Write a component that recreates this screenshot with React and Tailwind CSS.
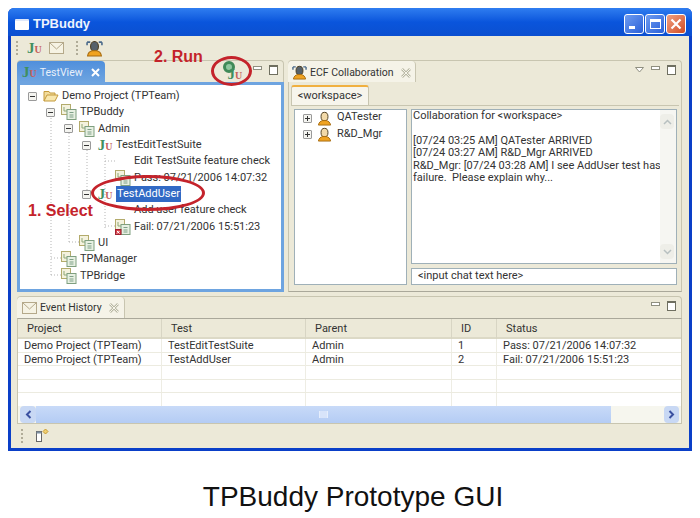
const font = "font-['Roboto',sans-serif]";

function JU({ className = "" }) {
  return (
    <span className={`inline-flex items-baseline font-['Liberation_Serif',serif] font-bold leading-none ${className}`}>
      <span className="text-[15px] text-[#3f8f5f]">J</span>
      <span className="text-[10px] text-[#c4605a]">U</span>
    </span>
  );
}

function PackageIcon({ fail }) {
  return (
    <svg width="16" height="16" viewBox="0 0 16 16" className="shrink-0">
      <rect x="0.5" y="0.5" width="9" height="10" fill="#f4f2de" stroke="#b3ab6c" />
      <path d="M3 3v4h3" stroke="#8fa878" fill="none" />
      <rect x="6" y="5.5" width="9" height="10" fill="#e7f0e2" stroke="#7f9f80" />
      <path d="M8.5 8.5h4M8.5 11h4M8.5 13h4" stroke="#7fa088" />
      {fail && <rect x="0.5" y="10.5" width="5.5" height="5" fill="#d8404a" stroke="#a02030" />}
      {fail && <path d="M2 12l2.5 2.5M4.5 12L2 14.5" stroke="#fff" />}
    </svg>
  );
}

function FolderIcon() {
  return (
    <svg width="16" height="14" viewBox="0 0 16 14" className="shrink-0">
      <path d="M1 12V2.5h5l1 1.5h5v2" fill="#f2dc9c" stroke="#c49a3c" />
      <path d="M1 12l3-6h11l-3 6z" fill="#f8e7ae" stroke="#c49a3c" />
    </svg>
  );
}

function MailIcon() {
  return (
    <svg width="15" height="12" viewBox="0 0 15 12" className="shrink-0">
      <rect x="0.5" y="0.5" width="14" height="11" fill="#f6f3e4" stroke="#b5a98a" />
      <path d="M1 1l6.5 6L14 1" fill="none" stroke="#b5a98a" />
    </svg>
  );
}

function PersonIcon({ size = 15, dark }) {
  return (
    <svg width={size} height={size} viewBox="0 0 16 16" className="shrink-0">
      {dark && <path d="M1 2h3M12 2h3M1 2v3M15 2v3" stroke="#4a6a8a" strokeWidth="1.5" fill="none" />}
      <ellipse cx="8" cy="6" rx="3.7" ry="4.6" fill={dark ? "#56616a" : "#f2d9a8"} stroke="#4a3a1c" />
      <path d="M1.5 15c.4-3 2.6-4.4 4.5-4.8h4c1.9.4 4.1 1.8 4.5 4.8z" fill="#f0a321" stroke="#a86c10" />
    </svg>
  );
}

function PaneButtons({ menu }) {
  return (
    <div className="flex items-center gap-[7px]">
      {menu && (
        <svg width="9" height="6" viewBox="0 0 9 6"><path d="M.5.5h8L4.5 5z" fill="#fff" stroke="#8f8f80" /></svg>
      )}
      <div className="w-[9px] h-[4px] bg-white border border-[#8f8f80] mb-[4px]" />
      <div className="w-[9px] h-[10px] bg-white border border-[#6f6f60] border-t-2" />
    </div>
  );
}

function ScrollArrow({ down }) {
  return (
    <div className="w-[14px] h-[15px] bg-[#eeeee8] rounded-sm flex items-center justify-center">
      <svg width="9" height="6" viewBox="0 0 9 6">
        <path d={down ? "M1 1l3.5 3.5L8 1" : "M1 5l3.5-3.5L8 5"} fill="none" stroke="#b8c0c0" strokeWidth="1.5" />
      </svg>
    </div>
  );
}

function CloseX() {
  return (
    <svg className="shrink-0" width="10" height="10" viewBox="0 0 10 10">
      <path d="M1 1l8 8M9 1L1 9" stroke="#b8b8a4" strokeWidth="2.5" />
      <path d="M1 1l8 8M9 1L1 9" stroke="#f6f4ea" strokeWidth="1" />
    </svg>
  );
}

const tree = [
  { pad: "pl-[8px]", exp: "-", icon: "folder", text: "Demo Project (TPTeam)" },
  { pad: "pl-[26px]", exp: "-", icon: "pkg", text: "TPBuddy" },
  { pad: "pl-[44px]", exp: "-", icon: "pkg", text: "Admin" },
  { pad: "pl-[62px]", exp: "-", icon: "ju", text: "TestEditTestSuite" },
  { pad: "pl-[80px]", text: "Edit TestSuite feature check" },
  { pad: "pl-[80px]", icon: "pkg", text: "Pass: 07/21/2006 14:07:32" },
  { pad: "pl-[62px]", exp: "-", icon: "ju", text: "TestAddUser", selected: true },
  { pad: "pl-[80px]", text: "Add user feature check" },
  { pad: "pl-[80px]", icon: "fail", text: "Fail: 07/21/2006 15:51:23" },
  { pad: "pl-[44px]", icon: "pkg", text: "UI" },
  { pad: "pl-[26px]", icon: "pkg", text: "TPManager" },
  { pad: "pl-[26px]", icon: "pkg", text: "TPBridge" },
];

function Expander({ plus }) {
  return (
    <div className="relative w-[9px] h-[9px] bg-[#f4f4f0] border border-[#9a9a9a] rounded-[1px] flex items-center justify-center shrink-0">
      <div className="w-[5px] h-px bg-[#333]" />
      {plus && <div className="absolute w-px h-[5px] bg-[#333]" />}
    </div>
  );
}

function TreeRow({ row }) {
  return (
    <div className={`flex items-center h-[16.33px] ${row.pad}`}>
      <div className="w-[15px] shrink-0">{row.exp && <Expander />}</div>
      <div className="w-[16px] h-[16px] flex items-center justify-center shrink-0">
        {row.icon === "folder" && <FolderIcon />}
        {row.icon === "pkg" && <PackageIcon />}
        {row.icon === "fail" && <PackageIcon fail />}
        {row.icon === "ju" && <JU />}
      </div>
      <span
        className={
          row.selected
            ? "ml-[3px] px-px h-[16px] leading-[16px] bg-[#316ac5] text-white"
            : "ml-[3px] text-[#333]"
        }
      >
        {row.text}
      </span>
    </div>
  );
}

const events = [
  ["Demo Project (TPTeam)", "TestEditTestSuite", "Admin", "1", "Pass: 07/21/2006 14:07:32"],
  ["Demo Project (TPTeam)", "TestAddUser", "Admin", "2", "Fail: 07/21/2006 15:51:23"],
  ["", "", "", "", ""],
  ["", "", "", "", ""],
  ["", "", "", "", ""],
];

const cols = "grid grid-cols-[144px_144px_146px_45px_1fr]";

export default function App() {
  return (
    <div className={`relative w-[700px] h-[518px] bg-white overflow-hidden ${font} text-[11px] text-[#333]`}>
      <div className="pt-[8px] pl-[8px]">
        {/* window */}
        <div className="w-[684px] h-[443px] flex flex-col rounded-t-[6px] bg-[#0a3fc8] px-[3px] pb-[3px]">
          <div className="h-[28px] shrink-0 flex items-center -mx-[3px] px-[6px] pt-[4px] rounded-t-[6px] bg-gradient-to-b from-[#2f7df0] via-[#0a55dc] to-[#0b4fd0]">
            <div className="w-[14px] h-[11px] ml-[1px] bg-white rounded-[1px] border-t-2 border-[#dfe8fa]" />
            <span className="ml-[4px] font-bold text-[13px] text-[#eef3fd] font-['Liberation_Sans',sans-serif]">TPBuddy</span>
            <div className="ml-auto flex gap-[1px]">
              <div className="w-[20px] h-[20px] rounded-[3px] border border-white bg-gradient-to-br from-[#6f9cf0] to-[#2a5fd8] flex items-end pl-[4px] pb-[4px]">
                <div className="w-[6px] h-[3px] bg-white" />
              </div>
              <div className="w-[20px] h-[20px] rounded-[3px] border border-white bg-gradient-to-br from-[#6f9cf0] to-[#2a5fd8] flex items-center justify-center">
                <div className="w-[11px] h-[10px] border border-white border-t-[3px]" />
              </div>
              <div className="w-[20px] h-[20px] rounded-[3px] border border-white bg-gradient-to-br from-[#f0a080] to-[#d04a20] flex items-center justify-center">
                <svg width="12" height="12" viewBox="0 0 12 12"><path d="M1.5 1.5l9 9M10.5 1.5l-9 9" stroke="#fff" strokeWidth="2.2" /></svg>
              </div>
            </div>
          </div>

          <div className="flex-1 min-h-0 flex flex-col bg-[#ece9d8]">
            {/* toolbar */}
            <div className="h-[24px] shrink-0 flex items-center pl-[5px]">
              <div className="w-[2px] h-[14px] border-l-2 border-dotted border-[#b0ac98]" />
              <JU className="ml-[9px]" />
              <div className="ml-[7px]"><MailIcon /></div>
              <div className="ml-[12px] w-[2px] h-[14px] border-l-2 border-dotted border-[#b0ac98]" />
              <div className="ml-[8px]"><PersonIcon size={17} dark /></div>
            </div>

            {/* top panes */}
            <div className="h-[232px] shrink-0 flex gap-[4px] pl-[6px]">
              {/* test view */}
              <div className="w-[267px] flex flex-col">
                <div className="h-[22px] shrink-0 flex items-stretch bg-[#ece9d8] border border-b-0 border-[#c8c5b0] rounded-t-[4px]">
                  <div className="w-[88px] -ml-px flex items-center pl-[5px] pt-[2px] rounded-t-[4px] bg-gradient-to-b from-[#4f8fdc] to-[#6ea4e0] whitespace-nowrap">
                    <JU />
                    <span className="ml-[3px] text-[10.500px] text-[#e8f0fa]">TestView</span>
                    <svg className="ml-[8px]" width="9" height="9" viewBox="0 0 9 9"><path d="M1 1l7 7M8 1L1 8" stroke="#fff" strokeWidth="2" /></svg>
                  </div>
                  <div className="ml-auto flex items-center pr-[5px] pb-[4px]"><PaneButtons /></div>
                </div>
                <div className="relative flex-1 min-h-0 border-[3px] border-[#6ea4e0] bg-white pt-[3px]">
                  <svg className="absolute left-0 top-0" width="261" height="207" viewBox="0 0 261 207" fill="none" stroke="#b5b5b5" strokeDasharray="1 2">
                    <path d="M13 14v2M31 24v166M31 173h12M31 190h12M49 48v109M49 157h12M67 62v50M85 70v73M85 76h12M85 141h12" />
                  </svg>
                  <div className="relative">
                    {tree.map((row, i) => (
                      <TreeRow key={i} row={row} />
                    ))}
                  </div>
                </div>
              </div>

              {/* collaboration */}
              <div className="w-[394px] flex flex-col">
                <div className="h-[22px] shrink-0 flex items-stretch border border-b-0 border-[#c8c5b0] rounded-t-[4px]">
                  <div className="w-[128px] -ml-px flex items-center pl-[4px] pt-[2px] bg-[#f5f3e8] border-r border-[#c8c5b0] rounded-t-[4px] whitespace-nowrap">
                    <PersonIcon size={15} dark />
                    <span className="ml-[3px] text-[10.500px]">ECF Collaboration</span>
                    <div className="ml-[7px]"><CloseX /></div>
                  </div>
                  <div className="ml-auto flex items-center pr-[5px] pb-[3px]"><PaneButtons menu /></div>
                </div>
                <div className="flex-1 min-h-0 flex flex-col border border-t-0 border-[#c8c5b0] border-b-[#aaa89a] px-[2px] pt-[3px] pb-[6px]">
                  <div className="w-[78px] h-[20px] shrink-0 flex items-center justify-center bg-[#f7f5ec] border-t-2 border-x border-[#f0b040] border-x-[#c8c5b0] rounded-t-[3px]">
                    &lt;workspace&gt;
                  </div>
                  <div className="flex-1 min-h-0 flex gap-[4px] pl-[3px] pr-[2px] pt-[3px] border-t border-[#c8c5b0]">
                    <div className="w-[113px] bg-white border border-[#9fb0b8]">
                      {["QATester", "R&D_Mgr"].map((name) => (
                        <div key={name} className="flex items-center h-[16.500px] pl-[8px]">
                          <Expander plus />
                          <div className="ml-[5px]"><PersonIcon size={15} /></div>
                          <span className="ml-[5px] -mt-[2px]">{name}</span>
                        </div>
                      ))}
                    </div>
                    <div className="flex-1 min-w-0 flex flex-col gap-[4px]">
                      <div className="flex-1 min-h-0 flex bg-white border border-[#9fb0b8]">
                        <div className="flex-1 min-w-0 pl-[1px] leading-[12.5px] whitespace-nowrap">
                          <p>Collaboration for &lt;workspace&gt;</p>
                          <p className="mt-[12px]">[07/24 03:25 AM] QATester ARRIVED</p>
                          <p>[07/24 03:27 AM] R&amp;D_Mgr ARRIVED</p>
                          <p className="whitespace-pre">{"R&D_Mgr: [07/24 03:28 AM] I see AddUser test has\nfailure.  Please explain why..."}</p>
                        </div>
                        <div className="w-[16px] shrink-0 flex flex-col justify-between bg-[#f6f6f2] py-[4px]">
                          <ScrollArrow />
                          <ScrollArrow down />
                        </div>
                      </div>
                      <div className="h-[17px] shrink-0 flex items-center pl-[6px] bg-white border border-[#9fb0b8]">
                        &lt;input chat text here&gt;
                      </div>
                    </div>
                  </div>
                </div>
              </div>
            </div>

            {/* event history */}
            <div className="mt-[4px] ml-[6px] w-[665px] h-[128px] shrink-0 flex flex-col">
              <div className="h-[22px] shrink-0 flex items-stretch border border-b-0 border-[#c8c5b0] rounded-t-[4px]">
                <div className="w-[108px] -ml-px flex items-center pl-[5px] pt-[1px] bg-[#f5f3e8] border-r border-[#c8c5b0] rounded-t-[4px] whitespace-nowrap">
                  <MailIcon />
                  <span className="ml-[3px] text-[10.500px]">Event History</span>
                  <div className="ml-[7px]"><CloseX /></div>
                </div>
                <div className="ml-auto flex items-center pr-[5px] pb-[3px]"><PaneButtons /></div>
              </div>
              <div className="flex-1 min-h-0 flex flex-col border border-[#c8c5b0] border-t-[#aaa89a]">
                <div className={`${cols} h-[20px] shrink-0 bg-[#ece9d8] border-b-2 border-[#dcd9c6]`}>
                  {["Project", "Test", "Parent", "ID", "Status"].map((h) => (
                    <div key={h} className="pl-[9px] leading-[20px] border-r border-[#d8d5c4] last:border-r-0">{h}</div>
                  ))}
                </div>
                <div className="flex-1 min-h-0 bg-white">
                  {events.map((row, i) => (
                    <div key={i} className={`${cols} h-[13.500px] border-b border-[#ecebe0]`}>
                      {row.map((cell, j) => (
                        <div key={j} className="pl-[6px] leading-[13px] border-r border-[#eeede4] last:border-r-0">{cell}</div>
                      ))}
                    </div>
                  ))}
                </div>
                <div className="h-[17px] shrink-0 flex items-stretch bg-[#f6f6ee]">
                  <div className="w-[16px] ml-[2px] flex items-center justify-center bg-[#c8d8f4] rounded-sm">
                    <svg width="7" height="9" viewBox="0 0 7 9"><path d="M5.5 1L2 4.5 5.5 8" fill="none" stroke="#3a50a0" strokeWidth="2" /></svg>
                  </div>
                  <div className="w-[575px] flex items-center justify-center bg-gradient-to-b from-[#c8daf8] to-[#b4ccf4]">
                    <div className="w-[9px] h-[7px] border-x border-[#e6eefc] bg-[#d8e4fa]" />
                  </div>
                  <div className="ml-auto mr-[2px] w-[15px] flex items-center justify-center bg-[#c8d8f4] rounded-sm">
                    <svg width="7" height="9" viewBox="0 0 7 9"><path d="M1.5 1L5 4.5 1.5 8" fill="none" stroke="#3a50a0" strokeWidth="2" /></svg>
                  </div>
                </div>
              </div>
            </div>

            {/* status bar */}
            <div className="flex-1 flex items-center pl-[10px]">
              <div className="w-[2px] h-[14px] border-l-2 border-dotted border-[#b0ac98]" />
              <svg className="ml-[13px]" width="13" height="14" viewBox="0 0 13 14">
                <rect x="0.5" y="2.5" width="5" height="10" fill="#fff" stroke="#666" />
                <rect x="0.5" y="2.5" width="5" height="2" fill="#7d8ea0" />
                <path d="M9.5 0l2.5 2.5-2.5 2.5L7 2.5z" fill="#f0d070" stroke="#c89a30" />
              </svg>
            </div>
          </div>
        </div>
      </div>

      <p className="mt-[31px] pl-[6px] text-center font-['Liberation_Sans',sans-serif] text-[28px] leading-[30px] text-[#111]">
        TPBuddy Prototype GUI
      </p>

      {/* annotations drawn over the screenshot */}
      <span className="absolute left-[154px] top-[48px] font-['Liberation_Sans',sans-serif] font-bold text-[16px] leading-[18px] text-[#c4232b]">2. Run</span>
      <span className="absolute left-[28px] top-[202px] font-['Liberation_Sans',sans-serif] font-bold text-[16px] leading-[18px] text-[#c4232b]">1. Select</span>
      <div className="absolute left-[211px] top-[56px] w-[41px] h-[30px] rounded-[50%] border-[3px] border-[#c4232b] flex items-center justify-center">
        <div className="relative w-[20px] h-[20px]">
          <div className="absolute left-[1px] top-[0px] w-[12px] h-[12px] rounded-full border-[3px] border-[#3f8a58] bg-[#8fc8a0]" />
          <JU className="absolute left-[6px] top-[6px]" />
        </div>
      </div>
      <div className="absolute left-[91px] top-[175px] w-[114px] h-[36px] rounded-[50%] border-[3px] border-[#c4232b]" />
    </div>
  );
}
